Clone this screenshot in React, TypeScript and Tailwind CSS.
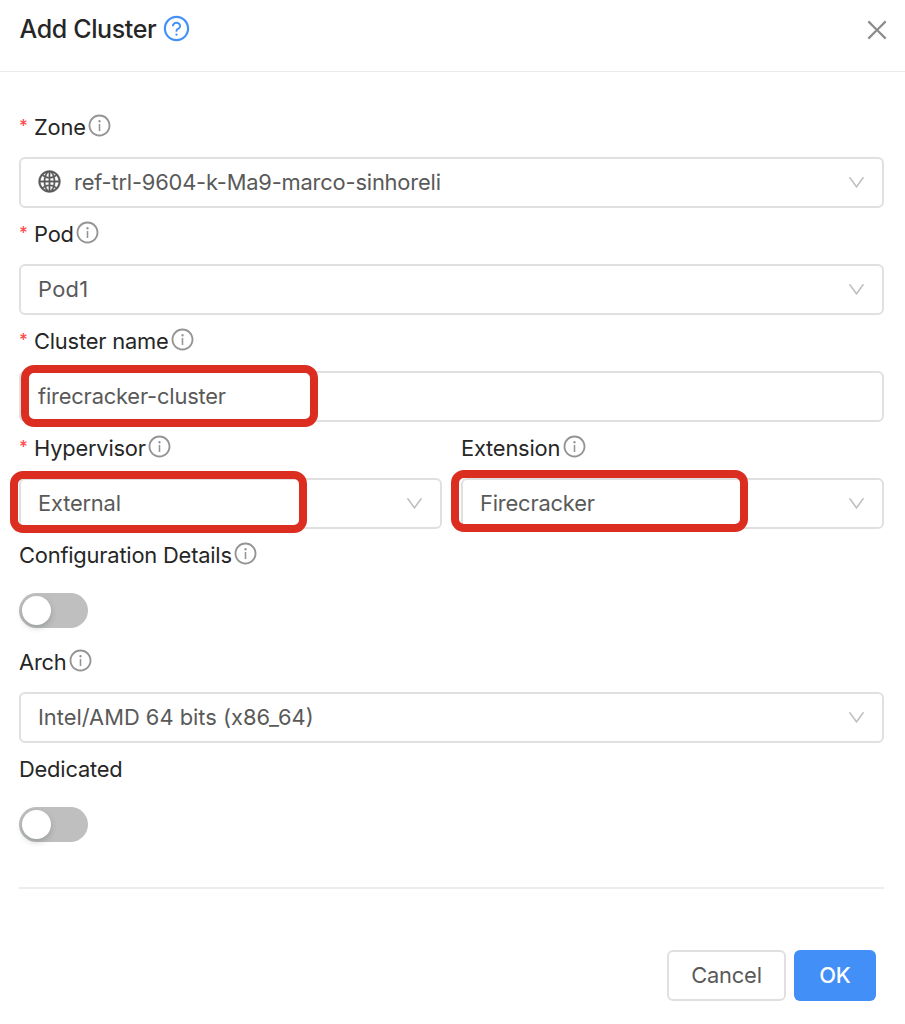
import { ReactNode } from 'react';
import {
  AiOutlineClose,
  AiOutlineDown,
  AiOutlineGlobal,
  AiOutlineInfoCircle,
  AiOutlineQuestionCircle,
} from 'react-icons/ai';

type FieldProps = {
  label: string;
  required?: boolean;
  info?: boolean;
  children: ReactNode;
};

function Field({ label, required, info = true, children }: FieldProps) {
  return (
    <div className="mb-[3px] flex-1">
      <div className="flex h-[53px] items-center pb-[5px] tracking-[-0.2px] text-[#262626]">
        {required && (
          <span className="mr-[7px] mb-1 w-2 text-[17px] leading-none font-medium text-[#ff4d4f]">
            *
          </span>
        )}
        <span className="whitespace-nowrap">{label}</span>
        {info && <AiOutlineInfoCircle className="mb-[5px] ml-[1.5px] size-[25px] text-[#949494]" />}
      </div>
      <div className="relative flex h-[51px] items-center">{children}</div>
    </div>
  );
}

function Select({ value, icon }: { value: string; icon?: ReactNode }) {
  return (
    <div className="flex h-[51px] w-full items-center rounded-md border-2 border-[#e0e0e0] pr-[15px] pl-[17px] text-[#595959]">
      {icon}
      <span className="flex-1 pt-px whitespace-nowrap">{value}</span>
      <AiOutlineDown className="size-[21px] text-[#bfbfbf]" />
    </div>
  );
}

function Switch() {
  return (
    <button className="mb-px flex h-[35px] w-[69px] items-center rounded-full bg-[#bfbfbf] px-[3px]">
      <span className="size-[29px] rounded-full bg-white shadow-[0_3px_6px_rgba(0,35,11,0.2)]" />
    </button>
  );
}

// Red frame drawn over the value of a field
function Highlight({ className }: { className: string }) {
  return (
    <div
      className={`pointer-events-none absolute h-[62px] w-[297px] rounded-[13px] border-8 border-[#db2d20] ${className}`}
    />
  );
}

export default function App() {
  return (
    <div className="h-[1024px] w-[905px] overflow-hidden bg-white font-[Inter,'Liberation_Sans',sans-serif] text-[21.875px] leading-none tracking-[-0.18px]">
      <header className="flex h-[72px] items-center justify-between border-b border-[#ebebeb] pr-[14px] pb-[12px] pl-[19.5px]">
        <h1 className="flex items-center text-[25px] font-medium tracking-[-0.36px] text-[#262626]">
          Add Cluster
          <AiOutlineQuestionCircle className="mb-[3px] ml-[5.5px] size-[29px] text-[#4390f8]" />
        </h1>
        <AiOutlineClose className="size-[28px] text-[#8c8c8c]" />
      </header>

      <main className="pt-8 pr-[21px] pl-[19px]">
        <Field label="Zone" required>
          <Select
            value="ref-trl-9604-k-Ma9-marco-sinhoreli"
            icon={
              <AiOutlineGlobal className="mr-3 mb-[3px] -ml-px size-[25px] stroke-current stroke-[16px]" />
            }
          />
        </Field>
        <Field label="Pod" required>
          <div className="w-full tracking-[0.3px]">
            <Select value="Pod1" />
          </div>
        </Field>
        <Field label="Cluster name" required>
          <div className="flex h-[51px] w-full items-center rounded-md border-2 border-[#e0e0e0] px-[17px] pt-px text-[#595959]">
            firecracker-cluster
          </div>
          <Highlight className="top-[-6px] left-[2px]" />
        </Field>
        <div className="flex gap-[19px]">
          <Field label="Hypervisor" required>
            <Select value="External" />
            <Highlight className="top-[-7px] left-[-9px]" />
          </Field>
          <Field label="Extension">
            <Select value="Firecracker" />
            <Highlight className="top-[-8px] left-[-10px]" />
          </Field>
        </div>
        <Field label="Configuration Details">
          <Switch />
        </Field>
        <Field label="Arch">
          <div className="w-full tracking-normal">
            <Select value="Intel/AMD 64 bits (x86_64)" />
          </div>
        </Field>
        <Field label="Dedicated" info={false}>
          <Switch />
        </Field>
      </main>

      <footer className="mt-[37px] mr-[21px] ml-[19px] flex justify-end gap-2 border-t-2 border-[#ececec] pt-[61px] pr-2">
        <button className="h-[51px] w-[119px] rounded-md border-2 border-[#e0e0e0] pt-px text-[#595959]">
          Cancel
        </button>
        <button className="h-[51px] w-[82px] rounded-md bg-[#438ff8] pt-px font-medium text-white">
          OK
        </button>
      </footer>
    </div>
  );
}
